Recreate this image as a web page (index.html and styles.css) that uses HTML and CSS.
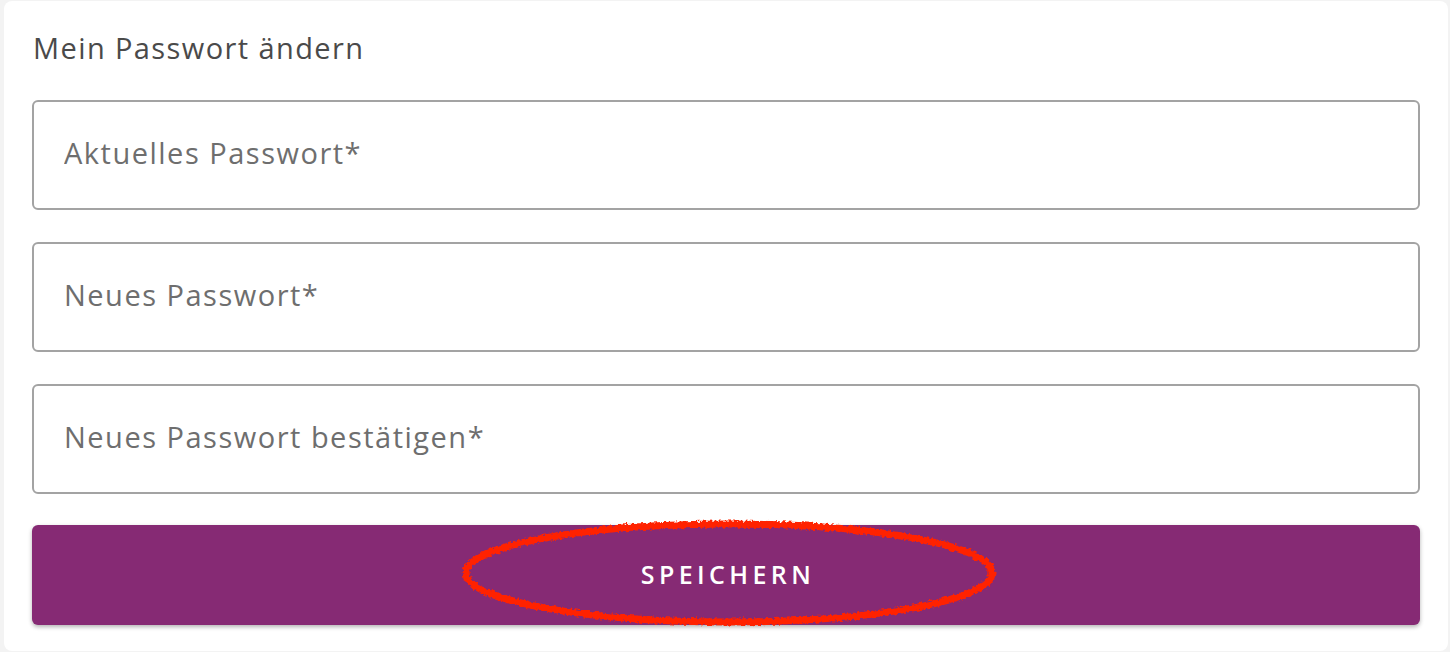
FILE: index.html
```html
<!DOCTYPE html>
<html lang="de">
<head>
<meta charset="utf-8">
<title>Mein Passwort ändern</title>
<link rel="stylesheet" href="styles.css">
</head>
<body>
<section class="card">
  <h2 class="card-title">Mein Passwort ändern</h2>
  <form class="pw-form">
    <input class="field" type="password" placeholder="Aktuelles Passwort*">
    <input class="field" type="password" placeholder="Neues Passwort*">
    <input class="field" type="password" placeholder="Neues Passwort bestätigen*">
    <div class="btn-wrap">
      <button class="btn" type="button">SPEICHERN</button>
      <svg class="scribble" width="560" height="120" viewBox="0 0 560 120" aria-hidden="true">
        <defs>
          <filter id="rough" x="-10%" y="-30%" width="120%" height="160%">
            <feTurbulence type="fractalNoise" baseFrequency="0.35" numOctaves="2" seed="3" result="n"/>
            <feDisplacementMap in="SourceGraphic" in2="n" scale="5" xChannelSelector="R" yChannelSelector="G"/>
          </filter>
        </defs>
        <ellipse cx="280" cy="60" rx="263" ry="49" fill="none" stroke="#ff2200" stroke-width="7" filter="url(#rough)"/>
      </svg>
    </div>
  </form>
</section>
</body>
</html>
```

FILE: styles.css
```css
html, body {
  margin: 0;
  padding: 0;
}
body {
  background: #f3f3f3;
  padding: 1px 2px 1px 4px;
  font-family: "Open Sans", Lato, sans-serif;
}
.card {
  background: #ffffff;
  border-radius: 8px;
  padding: 26px 28px 26px 28px;
  height: 650px;
  box-sizing: border-box;
}
.card-title {
  margin: 0 0 0 1px;
  font-weight: 400;
  font-size: 29px;
  letter-spacing: 1.4px;
  line-height: 42px;
  color: #4a4a4a;
}
.pw-form {
  margin-top: 31px;
  display: flex;
  flex-direction: column;
  gap: 32px;
}
.field {
  display: block;
  width: 100%;
  box-sizing: border-box;
  height: 110px;
  border: 2px solid #a3a3a3;
  border-radius: 6px;
  padding: 0 30px 6px;
  font-family: inherit;
  font-size: 29px;
  letter-spacing: 1.5px;
  color: #4a4a4a;
  background: #fff;
  outline: none;
}
.field::placeholder {
  color: #6e6e6e;
  opacity: 1;
}
.btn-wrap {
  position: relative;
  margin-top: -1px;
}
.btn {
  display: block;
  width: 100%;
  height: 100px;
  border: none;
  border-radius: 6px;
  background: #862a74;
  color: #ffffff;
  font-family: inherit;
  font-size: 25px;
  font-weight: 600;
  letter-spacing: 4.4px;
  padding: 0 0 2px 4px;
  box-shadow: 0 2px 4px rgba(0, 0, 0, 0.3);
  cursor: pointer;
}
.scribble {
  position: absolute;
  left: 417px;
  top: -12px;
  overflow: visible;
  pointer-events: none;
}
```
